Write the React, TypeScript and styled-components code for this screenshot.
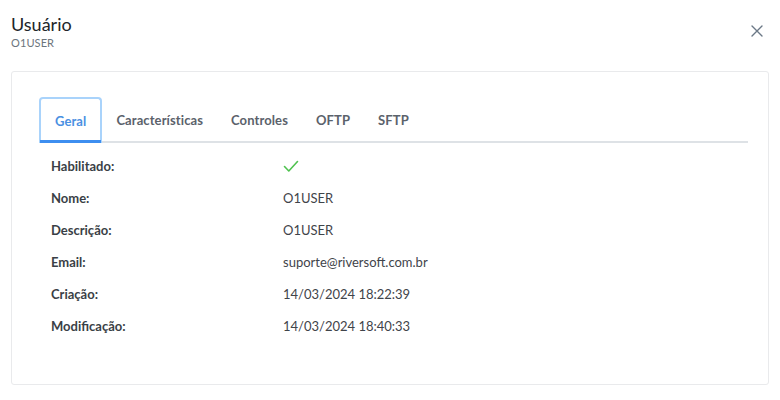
import React from "react";
import styled, { createGlobalStyle } from "styled-components";

const Global = createGlobalStyle`
  html, body { margin: 0; padding: 0; background: #fff; }
  body { font-family: Lato, "Open Sans", sans-serif; -webkit-font-smoothing: antialiased; }
  * { box-sizing: border-box; }
`;

const Modal = styled.div`
  width: 780px;
  height: 400px;
  padding: 12px 11px 0 11px;
  background: #fff;
`;

const Header = styled.div`
  display: flex;
  justify-content: space-between;
  align-items: flex-start;
  height: 59px;
`;

const TitleBlock = styled.div`
  display: flex;
  flex-direction: column;
`;

const Title = styled.h1`
  margin: 0;
  font-size: 18px;
  line-height: 24px;
  font-weight: 400;
  color: #212529;
`;

const Subtitle = styled.div`
  font-size: 11px;
  line-height: 14px;
  color: #6c757d;
  letter-spacing: 0.1px;
`;

const CloseButton = styled.button`
  border: 0;
  background: transparent;
  padding: 0;
  margin: 12px 5px 0 0;
  width: 14px;
  height: 14px;
  display: flex;
  align-items: center;
  justify-content: center;
  cursor: pointer;
`;

const Card = styled.div`
  border: 1px solid #e9eaec;
  border-radius: 3px;
  height: 314px;
  padding: 25px 20px 0 27px;
`;

const TabList = styled.div`
  display: flex;
  border-bottom: 2px solid #dee2e6;
  height: 46px;
`;

const Tab = styled.div<{ $active?: boolean }>`
  position: relative;
  padding: 0 14px;
  height: 46px;
  display: flex;
  align-items: center;
  font-size: 13px;
  font-weight: 700;
  letter-spacing: 0.1px;
  color: ${(p) => (p.$active ? "#4a90e2" : "#5b626b")};
  border: ${(p) => (p.$active ? "2px solid #a9d3fb" : "0")};
  border-bottom: 0;
  border-radius: 4px 4px 0 0;
  margin-bottom: -2px;
  &::after {
    content: "";
    position: absolute;
    left: -1px;
    right: -1px;
    bottom: 0;
    height: 3px;
    background: ${(p) => (p.$active ? "#3d8ef0" : "transparent")};
  }
`;

const Rows = styled.div`
  display: flex;
  flex-direction: column;
  padding: 7px 0 0 12px;
`;

const Row = styled.div`
  display: grid;
  grid-template-columns: 232px 1fr;
  height: 32px;
  align-items: center;
  font-size: 13px;
`;

const Label = styled.span`
  font-weight: 700;
  color: #3a3f46;
`;

const Value = styled.span`
  color: #3f444a;
  display: flex;
  align-items: center;
`;

const rows: [string, string][] = [
  ["Nome:", "O1USER"],
  ["Descrição:", "O1USER"],
  ["Email:", "suporte@riversoft.com.br"],
  ["Criação:", "14/03/2024 18:22:39"],
  ["Modificação:", "14/03/2024 18:40:33"],
];

export default function App() {
  return (
    <>
      <Global />
      <Modal>
        <Header>
          <TitleBlock>
            <Title>Usuário</Title>
            <Subtitle>O1USER</Subtitle>
          </TitleBlock>
          <CloseButton aria-label="Fechar">
            <svg width="12" height="12" viewBox="0 0 12 12">
              <path d="M1 1L11 11M11 1L1 11" stroke="#6b7886" strokeWidth="1.4" strokeLinecap="round" />
            </svg>
          </CloseButton>
        </Header>
        <Card>
          <TabList>
            <Tab $active>Geral</Tab>
            <Tab>Características</Tab>
            <Tab>Controles</Tab>
            <Tab>OFTP</Tab>
            <Tab>SFTP</Tab>
          </TabList>
          <Rows>
            <Row>
              <Label>Habilitado:</Label>
              <Value>
                <svg width="16" height="13" viewBox="0 0 16 13">
                  <path d="M1.5 6.5L5.8 11L14.5 1.5" stroke="#4fc24f" strokeWidth="1.6" fill="none" strokeLinecap="round" strokeLinejoin="round" />
                </svg>
              </Value>
            </Row>
            {rows.map(([l, v]) => (
              <Row key={l}>
                <Label>{l}</Label>
                <Value>{v}</Value>
              </Row>
            ))}
          </Rows>
        </Card>
      </Modal>
    </>
  );
}
